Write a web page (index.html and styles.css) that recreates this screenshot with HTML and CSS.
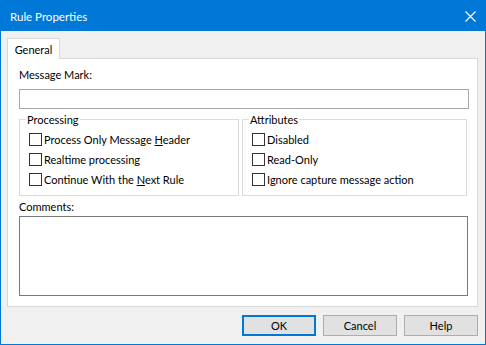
FILE: index.html
```html
<!DOCTYPE html>
<html>
<head>
<meta charset="utf-8">
<link rel="stylesheet" href="styles.css">
</head>
<body>
<div class="window">
  <div class="titlebar">
    <span class="title">Rule Properties</span>
    <svg class="close" width="11" height="11" viewBox="0 0 11 11"><path d="M0.5 0.5L10.5 10.5M10.5 0.5L0.5 10.5" stroke="#fff" stroke-width="1.1" fill="none"/></svg>
  </div>
  <div class="body">
    <div class="tabs"><div class="tab">General</div></div>
    <div class="panel">
      <div class="label">Message Mark:</div>
      <div class="input"></div>
      <div class="groups">
        <fieldset class="group group-proc">
          <legend>Processing</legend>
          <div class="check"><span class="box"></span><span>Process Only Message <u>H</u>eader</span></div>
          <div class="check"><span class="box"></span><span>Realtime processing</span></div>
          <div class="check"><span class="box"></span><span>Continue With the <u>N</u>ext Rule</span></div>
        </fieldset>
        <fieldset class="group group-attr">
          <legend>Attributes</legend>
          <div class="check"><span class="box"></span><span>Disabled</span></div>
          <div class="check"><span class="box"></span><span>Read-Only</span></div>
          <div class="check"><span class="box"></span><span>Ignore capture message action</span></div>
        </fieldset>
      </div>
      <div class="label label-comments">Comments:</div>
      <div class="textarea"></div>
    </div>
    <div class="buttons">
      <div class="btn btn-default">OK</div>
      <div class="btn">Cancel</div>
      <div class="btn">Help</div>
    </div>
  </div>
</div>
</body>
</html>
```
FILE: styles.css
```css
html, body {
  margin: 0;
  padding: 0;
}
body {
  font-family: Lato, "Liberation Sans", sans-serif;
  font-size: 11px;
  line-height: 15px;
  color: #000;
  background: #f0f0f0;
}
.window {
  width: 486px;
  height: 345px;
  box-sizing: border-box;
  border: 1px solid #0078d7;
  background: #f0f0f0;
  display: flex;
  flex-direction: column;
}
.titlebar {
  height: 30px;
  background: #0078d7;
  color: #fff;
  display: flex;
  align-items: center;
  justify-content: space-between;
  padding: 0 9px 0 9px;
}
.title {
  font-size: 11.5px;
}
.close {
  display: block;
}
.body {
  padding: 7px 7px 0 6px;
}
.tabs {
  display: flex;
  position: relative;
  z-index: 1;
  margin-bottom: -1px;
}
.tab {
  width: 51px;
  height: 20px;
  border: 1px solid #d9d9d9;
  border-bottom: none;
  background: #fff;
  display: flex;
  align-items: center;
  justify-content: center;
}
.panel {
  width: 450px;
  border: 1px solid #d9d9d9;
  background: #fff;
  padding: 8px 8px 10px 11px;
}
.label {
  height: 15px;
}
.input {
  margin-top: 7px;
  height: 18px;
  width: 448px;
  border: 1px solid #a8a8a8;
  background: #fff;
}
.groups {
  display: flex;
  gap: 3px;
  margin-top: 3px;
}
.group {
  margin: 0;
  border: 1px solid #dcdcdc;
  padding: 2px 0 5px 9px;
  box-sizing: border-box;
  height: 84px;
  min-width: 0;
}
.group legend {
  padding: 0 1px;
  margin-left: -3px;
  line-height: 15px;
}
.group-proc {
  width: 220px;
}
.group-attr {
  width: 225px;
}
.check {
  height: 20px;
  display: flex;
  align-items: center;
  gap: 2px;
  white-space: nowrap;
}
.box {
  width: 11px;
  height: 11px;
  border: 1px solid #333;
  background: #fff;
  flex: none;
}
.label-comments {
  margin-top: 3px;
}
.textarea {
  margin-top: 2px;
  width: 447px;
  height: 78px;
  border: 1px solid #7a7a7a;
  background: #fff;
}
.buttons {
  display: flex;
  justify-content: flex-end;
  gap: 7px;
  margin-top: 8px;
}
.btn {
  width: 72px;
  height: 19px;
  border: 1px solid #adadad;
  background: #e1e1e1;
  display: flex;
  align-items: center;
  justify-content: center;
}
.btn-default {
  width: 70px;
  height: 17px;
  border: 2px solid #0078d7;
}
```
